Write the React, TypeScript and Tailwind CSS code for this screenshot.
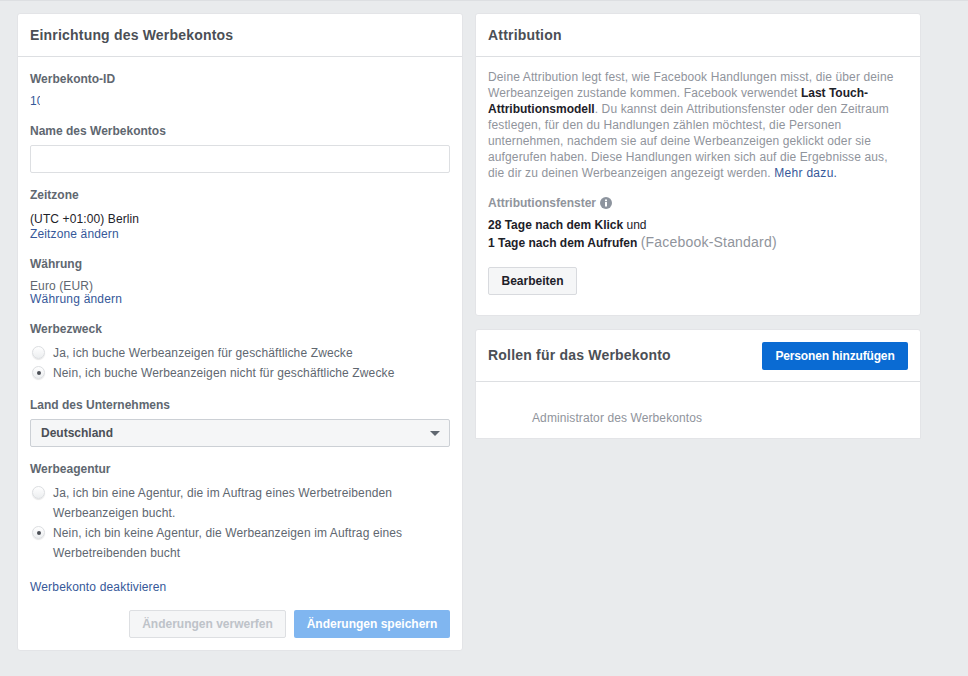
import type { ReactNode } from "react";

function Label({ children, className = "" }: { children: ReactNode; className?: string }) {
  return <div className={`text-[12px] leading-[16px] font-bold text-[#606770] ${className}`}>{children}</div>;
}

function Radio({ checked, children }: { checked?: boolean; children: ReactNode }) {
  return (
    <div className="flex items-start">
      <div className="mt-[3px] ml-[2px] mr-[8px] flex h-[13px] w-[13px] shrink-0 items-center justify-center rounded-full border border-[#dcdee1] bg-gradient-to-b from-white to-[#eceef0] shadow-[0_1px_1px_rgba(0,0,0,0.1)]">
        {checked && <div className="h-[4px] w-[4px] rounded-full bg-[#4b4f56]" />}
      </div>
      <div className="text-[12px] leading-[20px] tracking-[0.125px] text-[#606770]">{children}</div>
    </div>
  );
}

function AccountSetup() {
  return (
    <div className="h-[638px] w-[446px] shrink-0 rounded-[3px] border border-[#e3e4e7] bg-white">
      <div className="flex h-[43px] items-center border-b border-[#dddfe2] px-[12px] text-[14px] font-bold tracking-[0.19px] text-[#4b4f56]">
        Einrichtung des Werbekontos
      </div>
      <div className="px-[12px] pt-[14px]">
        <Label>Werbekonto-ID</Label>
        <div className="mt-[6px] h-[16px] w-[10px] overflow-hidden text-[12px] leading-[16px] text-[#365899]">10</div>
        <Label className="mt-[14px]">Name des Werbekontos</Label>
        <div className="mt-[6px] h-[28px] rounded-[2px] border border-[#dddfe2] bg-white" />
        <Label className="mt-[14px]">Zeitzone</Label>
        <div className="mt-[9px] text-[12px] leading-[15px] tracking-[0.11px] text-[#1d2129]">(UTC +01:00) Berlin</div>
        <div className="text-[12px] leading-[15px] tracking-[0.14px] text-[#365899]">Zeitzone ändern</div>
        <Label className="mt-[14px]">Währung</Label>
        <div className="mt-[8px] text-[12px] leading-[13px] tracking-[0.1px] text-[#606770]">Euro (EUR)</div>
        <div className="text-[12px] leading-[13px] tracking-[0.2px] text-[#365899]">Währung ändern</div>
        <Label className="mt-[15px]">Werbezweck</Label>
        <div className="mt-[6px]">
          <Radio>Ja, ich buche Werbeanzeigen für geschäftliche Zwecke</Radio>
          <Radio checked>Nein, ich buche Werbeanzeigen nicht für geschäftliche Zwecke</Radio>
        </div>
        <Label className="mt-[14px]">Land des Unternehmens</Label>
        <div className="mt-[6px] flex h-[28px] items-center justify-between rounded-[2px] border border-[#ccd0d5] bg-[#f5f6f7] pl-[10px] pr-[9px] text-[12px] font-bold text-[#4b4f56]">
          Deutschland
          <div className="h-0 w-0 border-x-[5px] border-t-[5px] border-x-transparent border-t-[#606770]" />
        </div>
        <Label className="mt-[14px]">Werbeagentur</Label>
        <div className="mt-[6px]">
          <Radio>
            Ja, ich bin eine Agentur, die im Auftrag eines Werbetreibenden
            <br />
            Werbeanzeigen bucht.
          </Radio>
          <Radio checked>
            Nein, ich bin keine Agentur, die Werbeanzeigen im Auftrag eines
            <br />
            Werbetreibenden bucht
          </Radio>
        </div>
        <div className="mt-[16px] text-[12px] leading-[16px] tracking-[0.17px] text-[#365899]">Werbekonto deaktivieren</div>
        <div className="mt-[15px] flex justify-end gap-[8px]">
          <div className="flex h-[28px] w-[157px] items-center justify-center rounded-[2px] border border-[#dddfe2] bg-[#f5f6f7] text-[12px] font-bold text-[#bec3c9]">
            Änderungen verwerfen
          </div>
          <div className="flex h-[28px] w-[156px] items-center justify-center rounded-[2px] bg-[#80b6f0] text-[12px] font-bold text-white">
            Änderungen speichern
          </div>
        </div>
      </div>
    </div>
  );
}

function Attribution() {
  return (
    <div className="h-[303px] rounded-[3px] border border-[#e3e4e7] bg-white">
      <div className="flex h-[43px] items-center border-b border-[#dddfe2] px-[12px] text-[14px] font-bold tracking-[0.19px] text-[#4b4f56]">
        Attribution
      </div>
      <div className="px-[12px] pt-[12px]">
        <p className="text-[12px] leading-[16px] tracking-[0.125px] text-[#90949c]">
          Deine Attribution legt fest, wie Facebook Handlungen misst, die über deine
          <br />
          Werbeanzeigen zustande kommen. Facebook verwendet <b className="tracking-normal text-[#1d2129]">Last Touch-</b>
          <br />
          <b className="tracking-normal text-[#1d2129]">Attributionsmodell</b>. Du kannst dein Attributionsfenster oder den Zeitraum
          <br />
          festlegen, für den du Handlungen zählen möchtest, die Personen
          <br />
          unternehmen, nachdem sie auf deine Werbeanzeigen geklickt oder sie
          <br />
          aufgerufen haben. Diese Handlungen wirken sich auf die Ergebnisse aus,
          <br />
          die dir zu deinen Werbeanzeigen angezeigt werden. <span className="text-[#365899] tracking-[0.3px]">Mehr dazu.</span>
        </p>
        <div className="mt-[12px] flex h-[20px] items-center text-[12px] font-bold text-[#90949c]">
          Attributionsfenster
          <svg className="ml-[4px]" width="12" height="12" viewBox="0 0 12 12">
            <circle cx="6" cy="6" r="6" fill="#8d949e" />
            <rect x="5" y="5" width="2" height="4.5" fill="#fff" />
            <rect x="5" y="2.5" width="2" height="1.7" fill="#fff" />
          </svg>
        </div>
        <div className="mt-[3px] text-[12px] leading-[18px] text-[#1d2129]">
          <b>28 Tage nach dem Klick</b> und
        </div>
        <div className="text-[12px] leading-[17px] text-[#1d2129]">
          <b>1 Tage nach dem Aufrufen</b> <span className="text-[14px] tracking-[0.2px] text-[#90949c]">(Facebook-Standard)</span>
        </div>
        <div className="mt-[15px] flex h-[28px] w-[89px] items-center justify-center rounded-[2px] border border-[#d8dade] bg-[#f5f6f7] text-[12px] font-bold text-[#1d2129]">
          Bearbeiten
        </div>
      </div>
    </div>
  );
}

function Roles() {
  return (
    <div className="h-[110px] rounded-t-[3px] border border-[#e3e4e7] bg-white">
      <div className="flex h-[52px] items-center justify-between border-b border-[#dddfe2] pl-[12px] pr-[12px] text-[14px] font-bold tracking-[0.2px] text-[#4b4f56]">
        Rollen für das Werbekonto
        <div className="flex h-[28px] w-[146px] items-center justify-center rounded-[2px] bg-[#0a6bd3] text-[12px] font-bold tracking-[-0.15px] text-white">
          Personen hinzufügen
        </div>
      </div>
      <div className="pl-[56px] pt-[28px] text-[12px] leading-[16px] tracking-[0.1px] text-[#90949c]">Administrator des Werbekontos</div>
    </div>
  );
}

export default function App() {
  return (
    <div className="h-[676px] w-[968px] overflow-hidden border-t border-[#dddfe2] bg-[#e9ebed] pl-[17px] pt-[12px] font-['Liberation_Sans',Arial,sans-serif]">
      <div className="flex gap-[12px]">
        <AccountSetup />
        <div className="flex w-[446px] flex-col gap-[13px]">
          <Attribution />
          <Roles />
        </div>
      </div>
    </div>
  );
}
